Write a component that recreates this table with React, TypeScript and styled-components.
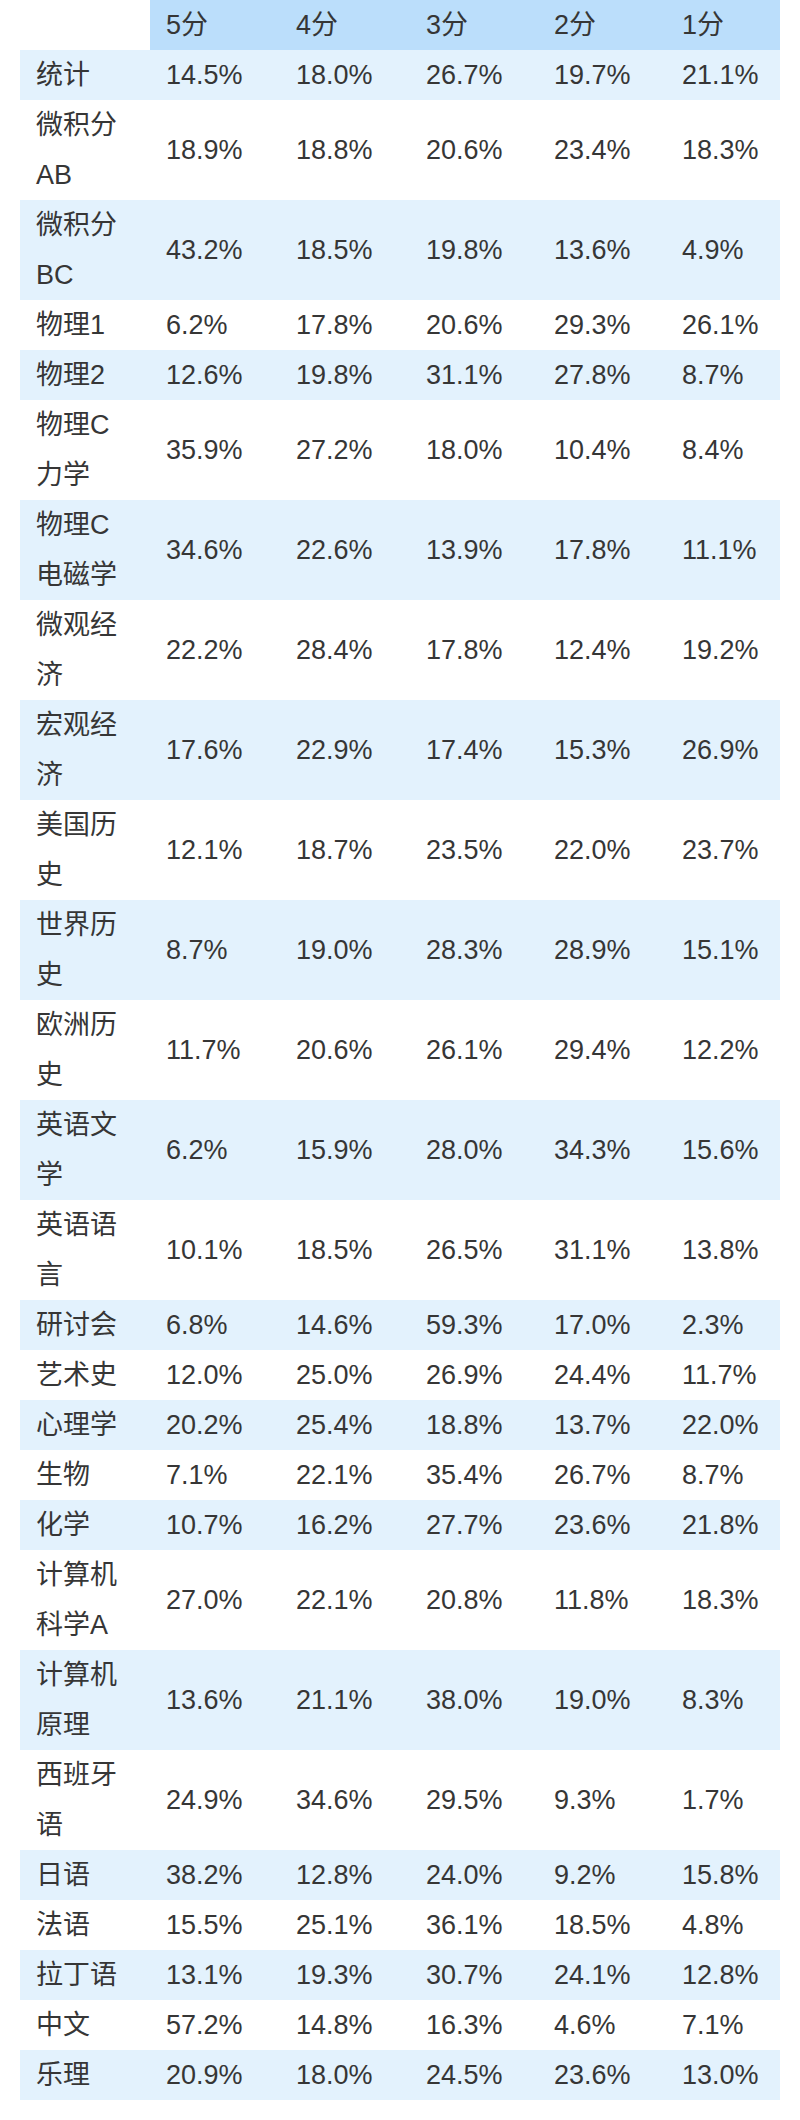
import React from "react";
import styled, { createGlobalStyle } from "styled-components";

const GlobalStyle = createGlobalStyle`
  html, body {
    margin: 0;
    padding: 0;
    background: #ffffff;
  }
  body {
    font-family: "Liberation Sans", Arial, "Noto Sans CJK SC", sans-serif;
    color: #363636;
  }
`;

const Page = styled.div`
  padding: 0 20px 20px 20px;
  width: 800px;
  box-sizing: border-box;
`;

const Table = styled.table`
  width: 760px;
  table-layout: fixed;
  border-collapse: collapse;
  border-spacing: 0;
  font-family: "Liberation Sans", Arial, "Noto Sans CJK SC", sans-serif;
  font-size: 27px;
  color: #363636;
`;

const HeadCell = styled.th<{ $blank?: boolean }>`
  background: ${(p) => (p.$blank ? "transparent" : "#bbdefb")};
  height: 50px;
  line-height: 50px;
  padding: 0 0 0 16px;
  text-align: left;
  font-weight: normal;
  vertical-align: middle;
`;

const Row = styled.tr<{ $shaded: boolean }>`
  background: ${(p) => (p.$shaded ? "#e3f2fd" : "#ffffff")};
`;

const NameCell = styled.td`
  padding: 0 26px 0 16px;
  line-height: 50px;
  vertical-align: middle;
  text-align: left;
  word-break: normal;
`;

const ValueCell = styled.td`
  padding: 0 0 0 16px;
  line-height: 50px;
  vertical-align: middle;
  text-align: left;
  white-space: nowrap;
`;

const headers = ["5分", "4分", "3分", "2分", "1分"];
const widths = [130, 130, 130, 128, 128, 114];

const rows: [string, string[]][] = [
  ["统计", ["14.5%", "18.0%", "26.7%", "19.7%", "21.1%"]],
  ["微积分AB", ["18.9%", "18.8%", "20.6%", "23.4%", "18.3%"]],
  ["微积分BC", ["43.2%", "18.5%", "19.8%", "13.6%", "4.9%"]],
  ["物理1", ["6.2%", "17.8%", "20.6%", "29.3%", "26.1%"]],
  ["物理2", ["12.6%", "19.8%", "31.1%", "27.8%", "8.7%"]],
  ["物理C力学", ["35.9%", "27.2%", "18.0%", "10.4%", "8.4%"]],
  ["物理C电磁学", ["34.6%", "22.6%", "13.9%", "17.8%", "11.1%"]],
  ["微观经济", ["22.2%", "28.4%", "17.8%", "12.4%", "19.2%"]],
  ["宏观经济", ["17.6%", "22.9%", "17.4%", "15.3%", "26.9%"]],
  ["美国历史", ["12.1%", "18.7%", "23.5%", "22.0%", "23.7%"]],
  ["世界历史", ["8.7%", "19.0%", "28.3%", "28.9%", "15.1%"]],
  ["欧洲历史", ["11.7%", "20.6%", "26.1%", "29.4%", "12.2%"]],
  ["英语文学", ["6.2%", "15.9%", "28.0%", "34.3%", "15.6%"]],
  ["英语语言", ["10.1%", "18.5%", "26.5%", "31.1%", "13.8%"]],
  ["研讨会", ["6.8%", "14.6%", "59.3%", "17.0%", "2.3%"]],
  ["艺术史", ["12.0%", "25.0%", "26.9%", "24.4%", "11.7%"]],
  ["心理学", ["20.2%", "25.4%", "18.8%", "13.7%", "22.0%"]],
  ["生物", ["7.1%", "22.1%", "35.4%", "26.7%", "8.7%"]],
  ["化学", ["10.7%", "16.2%", "27.7%", "23.6%", "21.8%"]],
  ["计算机科学A", ["27.0%", "22.1%", "20.8%", "11.8%", "18.3%"]],
  ["计算机原理", ["13.6%", "21.1%", "38.0%", "19.0%", "8.3%"]],
  ["西班牙语", ["24.9%", "34.6%", "29.5%", "9.3%", "1.7%"]],
  ["日语", ["38.2%", "12.8%", "24.0%", "9.2%", "15.8%"]],
  ["法语", ["15.5%", "25.1%", "36.1%", "18.5%", "4.8%"]],
  ["拉丁语", ["13.1%", "19.3%", "30.7%", "24.1%", "12.8%"]],
  ["中文", ["57.2%", "14.8%", "16.3%", "4.6%", "7.1%"]],
  ["乐理", ["20.9%", "18.0%", "24.5%", "23.6%", "13.0%"]],
];

export default function App() {
  return (
    <>
      <GlobalStyle />
      <Page>
        <Table>
          <colgroup>
            {widths.map((w, i) => (
              <col key={i} style={{ width: w }} />
            ))}
          </colgroup>
          <thead>
            <tr>
              <HeadCell $blank />
              {headers.map((h) => (
                <HeadCell key={h}>{h}</HeadCell>
              ))}
            </tr>
          </thead>
          <tbody>
            {rows.map(([name, vals], i) => (
              <Row key={name} $shaded={i % 2 === 0}>
                <NameCell>{name}</NameCell>
                {vals.map((v, j) => (
                  <ValueCell key={j}>{v}</ValueCell>
                ))}
              </Row>
            ))}
          </tbody>
        </Table>
      </Page>
    </>
  );
}
